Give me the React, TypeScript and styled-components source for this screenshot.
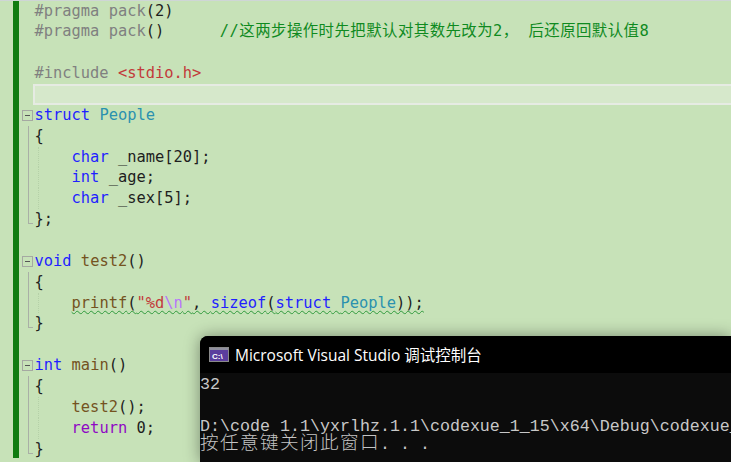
import React from "react";
import styled, { createGlobalStyle } from "styled-components";

const Global = createGlobalStyle`
  html, body { margin: 0; padding: 0; width: 731px; height: 462px; overflow: hidden; background: #c7e2b8; }
`;

const Page = styled.div`
  position: relative;
  width: 731px;
  height: 462px;
  overflow: hidden;
  background: #c7e2b8;
  display: flex;
  flex-direction: column;
`;
const TopEdge = styled.div`
  height: 1px;
  flex: none;
  background: #cfd6d6;
  margin-bottom: -1px;
  position: relative;
  z-index: 1;
`;
const Editor = styled.div`
  display: flex;
  align-items: flex-start;
  padding-left: 13px;
`;
const ChangeBar = styled.div`
  flex: none;
  width: 6px;
  height: 458px;
  background: #107c10;
`;
const Lines = styled.div`
  flex: 1;
  min-width: 0;
  padding-top: 0.5px;
  font-family: "DejaVu Sans Mono", "Noto Sans CJK SC", monospace;
  font-size: 15.4px;
  color: #1e1e1e;
`;
const Row = styled.div`
  display: flex;
  height: 20.87px;
`;
const Fold = styled.div<{ $kind?: "open" | "line" | "end" }>`
  position: relative;
  flex: none;
  width: 14px;
  ${(p) =>
    p.$kind === "line" &&
    `&::before { content: ""; position: absolute; left: 9px; top: 0; bottom: 0; width: 1px; background: #a9afa6; }`}
  ${(p) =>
    p.$kind === "end" &&
    `&::before { content: ""; position: absolute; left: 9px; top: 0; height: 15px; width: 5px; border-left: 1px solid #a9afa6; border-bottom: 1px solid #a9afa6; box-sizing: border-box; }`}
  ${(p) =>
    p.$kind === "open" &&
    `&::before { content: ""; position: absolute; left: 3px; top: 5px; width: 11px; height: 11px; box-sizing: border-box; border: 1px solid #a5a9a2; }
     &::after { content: ""; position: absolute; left: 6px; top: 10px; width: 5px; height: 1px; background: #555; }
     `}
`;
const Code = styled.div<{ $guide?: boolean }>`
  position: relative;
  flex: 1;
  padding-left: 1.5px;
  line-height: 20.87px;
  white-space: pre;
  ${(p) =>
    p.$guide &&
    `&::before { content: ""; position: absolute; left: 5px; top: 0; bottom: 0; border-left: 1px dotted #b5d1a8; }`}
`;
const CurrentLine = styled.div`
  flex: 1;
  box-sizing: border-box;
  height: 21px;
  background: #d6e8cb;
  border: 2px solid #e6ebe3;
  border-right: none;
`;
const Pre = styled.span`color: #808080;`;
const Kw = styled.span`color: #1f1fff;`;
const Ctl = styled.span`color: #8f08c4;`;
const Type = styled.span`color: #2b91af;`;
const Fn = styled.span`color: #74531f;`;
const Str = styled.span`color: #c23a3a;`;
const Esc = styled.span`color: #b776fb;`;
const Cmt = styled.span`
  color: #0f8a1f;
  letter-spacing: 0.47px;
`;
const Squiggle = styled.span`
  text-decoration: underline wavy #2f9a3c 1.3px;
  text-decoration-skip-ink: none;
  text-underline-offset: 2px;
`;

const Console = styled.div`
  position: absolute;
  left: 200px;
  top: 336px;
  right: 0;
  bottom: 0;
  border-top-left-radius: 8px;
  overflow: hidden;
  background: #0c0c0c;
  box-shadow: 0 0 16px rgba(0, 0, 0, 0.4);
  display: flex;
  flex-direction: column;
`;
const TitleBar = styled.div`
  flex: none;
  height: 37px;
  background: #000;
  display: flex;
  align-items: center;
  gap: 6px;
  padding-left: 9px;
  color: #fff;
  font-family: "Open Sans", "Noto Sans CJK SC", sans-serif;
  font-size: 15.5px;
  white-space: nowrap;
`;
const ConsoleBody = styled.div`
  flex: 1;
  padding-top: 1px;
  color: #c8c8c8;
  font-family: "Liberation Mono", "Noto Sans CJK SC", monospace;
  font-size: 16.67px;
  line-height: 21px;
`;
const ConsoleLine = styled.div`
  height: 21px;
  white-space: pre;
`;
const CjkRun = styled.span`
  font-family: "Noto Sans CJK SC", sans-serif;
  font-size: 18.6px;
  font-weight: 300;
  line-height: 0;
  vertical-align: 3px;
  letter-spacing: 1.4px;
  color: #c4c4c4;
`;
const Dots = styled.span`
  vertical-align: 3px;
  line-height: 0;
`;

const ConsoleIcon = () => (
  <svg width="20" height="15" viewBox="0 0 20 15" style={{ flex: "none" }}>
    <rect x="0.5" y="0.5" width="19" height="14" fill="#5b3d9e" stroke="#8a8a8a" />
    <rect x="1" y="1" width="18" height="2" fill="#8f8f9f" />
    <text x="3" y="12" fontSize="8" fontWeight="700" fill="#fff" fontFamily="Liberation Sans, sans-serif">
      C:\
    </text>
  </svg>
);

type Line = { fold?: "open" | "line" | "end"; guide?: boolean; current?: boolean; body?: React.ReactNode };

const lines: Line[] = [
  { body: <><Pre>#pragma pack</Pre>(2)</> },
  { body: <><Pre>#pragma pack</Pre>()      <Cmt>//这两步操作时先把默认对其数先改为2， 后还原回默认值8</Cmt></> },
  {},
  { body: <><Pre>#include </Pre><Str>&lt;stdio.h&gt;</Str></> },
  { current: true },
  { fold: "open", body: <><Kw>struct</Kw> <Type>People</Type></> },
  { fold: "line", body: "{" },
  { fold: "line", guide: true, body: <>    <Kw>char</Kw> _name[20];</> },
  { fold: "line", guide: true, body: <>    <Kw>int</Kw> _age;</> },
  { fold: "line", guide: true, body: <>    <Kw>char</Kw> _sex[5];</> },
  { fold: "end", body: "};" },
  {},
  { fold: "open", body: <><Kw>void</Kw> <Fn>test2</Fn>()</> },
  { fold: "line", body: "{" },
  {
    fold: "line",
    guide: true,
    body: (
      <>    <Squiggle><Fn>printf</Fn>(<Str>"%d</Str><Esc>\n</Esc><Str>"</Str>, <Kw>sizeof</Kw>(<Kw>struct</Kw> <Type>People</Type>));</Squiggle></>
    ),
  },
  { fold: "end", body: "}" },
  {},
  { fold: "open", body: <><Kw>int</Kw> <Fn>main</Fn>()</> },
  { fold: "line", body: "{" },
  { fold: "line", guide: true, body: <>    <Fn>test2</Fn>();</> },
  { fold: "line", guide: true, body: <>    <Ctl>return</Ctl> 0;</> },
  { fold: "end", body: "}" },
];

export default function App() {
  return (
    <Page>
      <Global />
      <TopEdge />
      <Editor>
        <ChangeBar />
        <Lines>
          {lines.map((l, i) => (
            <Row key={i}>
              <Fold $kind={l.fold} />
              {l.current ? <CurrentLine /> : <Code $guide={l.guide}>{l.body}</Code>}
            </Row>
          ))}
        </Lines>
      </Editor>
      <Console>
        <TitleBar>
          <ConsoleIcon />
          Microsoft Visual Studio 调试控制台
        </TitleBar>
        <ConsoleBody>
          <ConsoleLine>32</ConsoleLine>
          <ConsoleLine />
          <ConsoleLine>D:\code 1.1\yxrlhz.1.1\codexue_1_15\x64\Debug\codexue_</ConsoleLine>
          <ConsoleLine><CjkRun>按任意键关闭此窗口</CjkRun><Dots>. . .</Dots></ConsoleLine>
        </ConsoleBody>
      </Console>
    </Page>
  );
}
